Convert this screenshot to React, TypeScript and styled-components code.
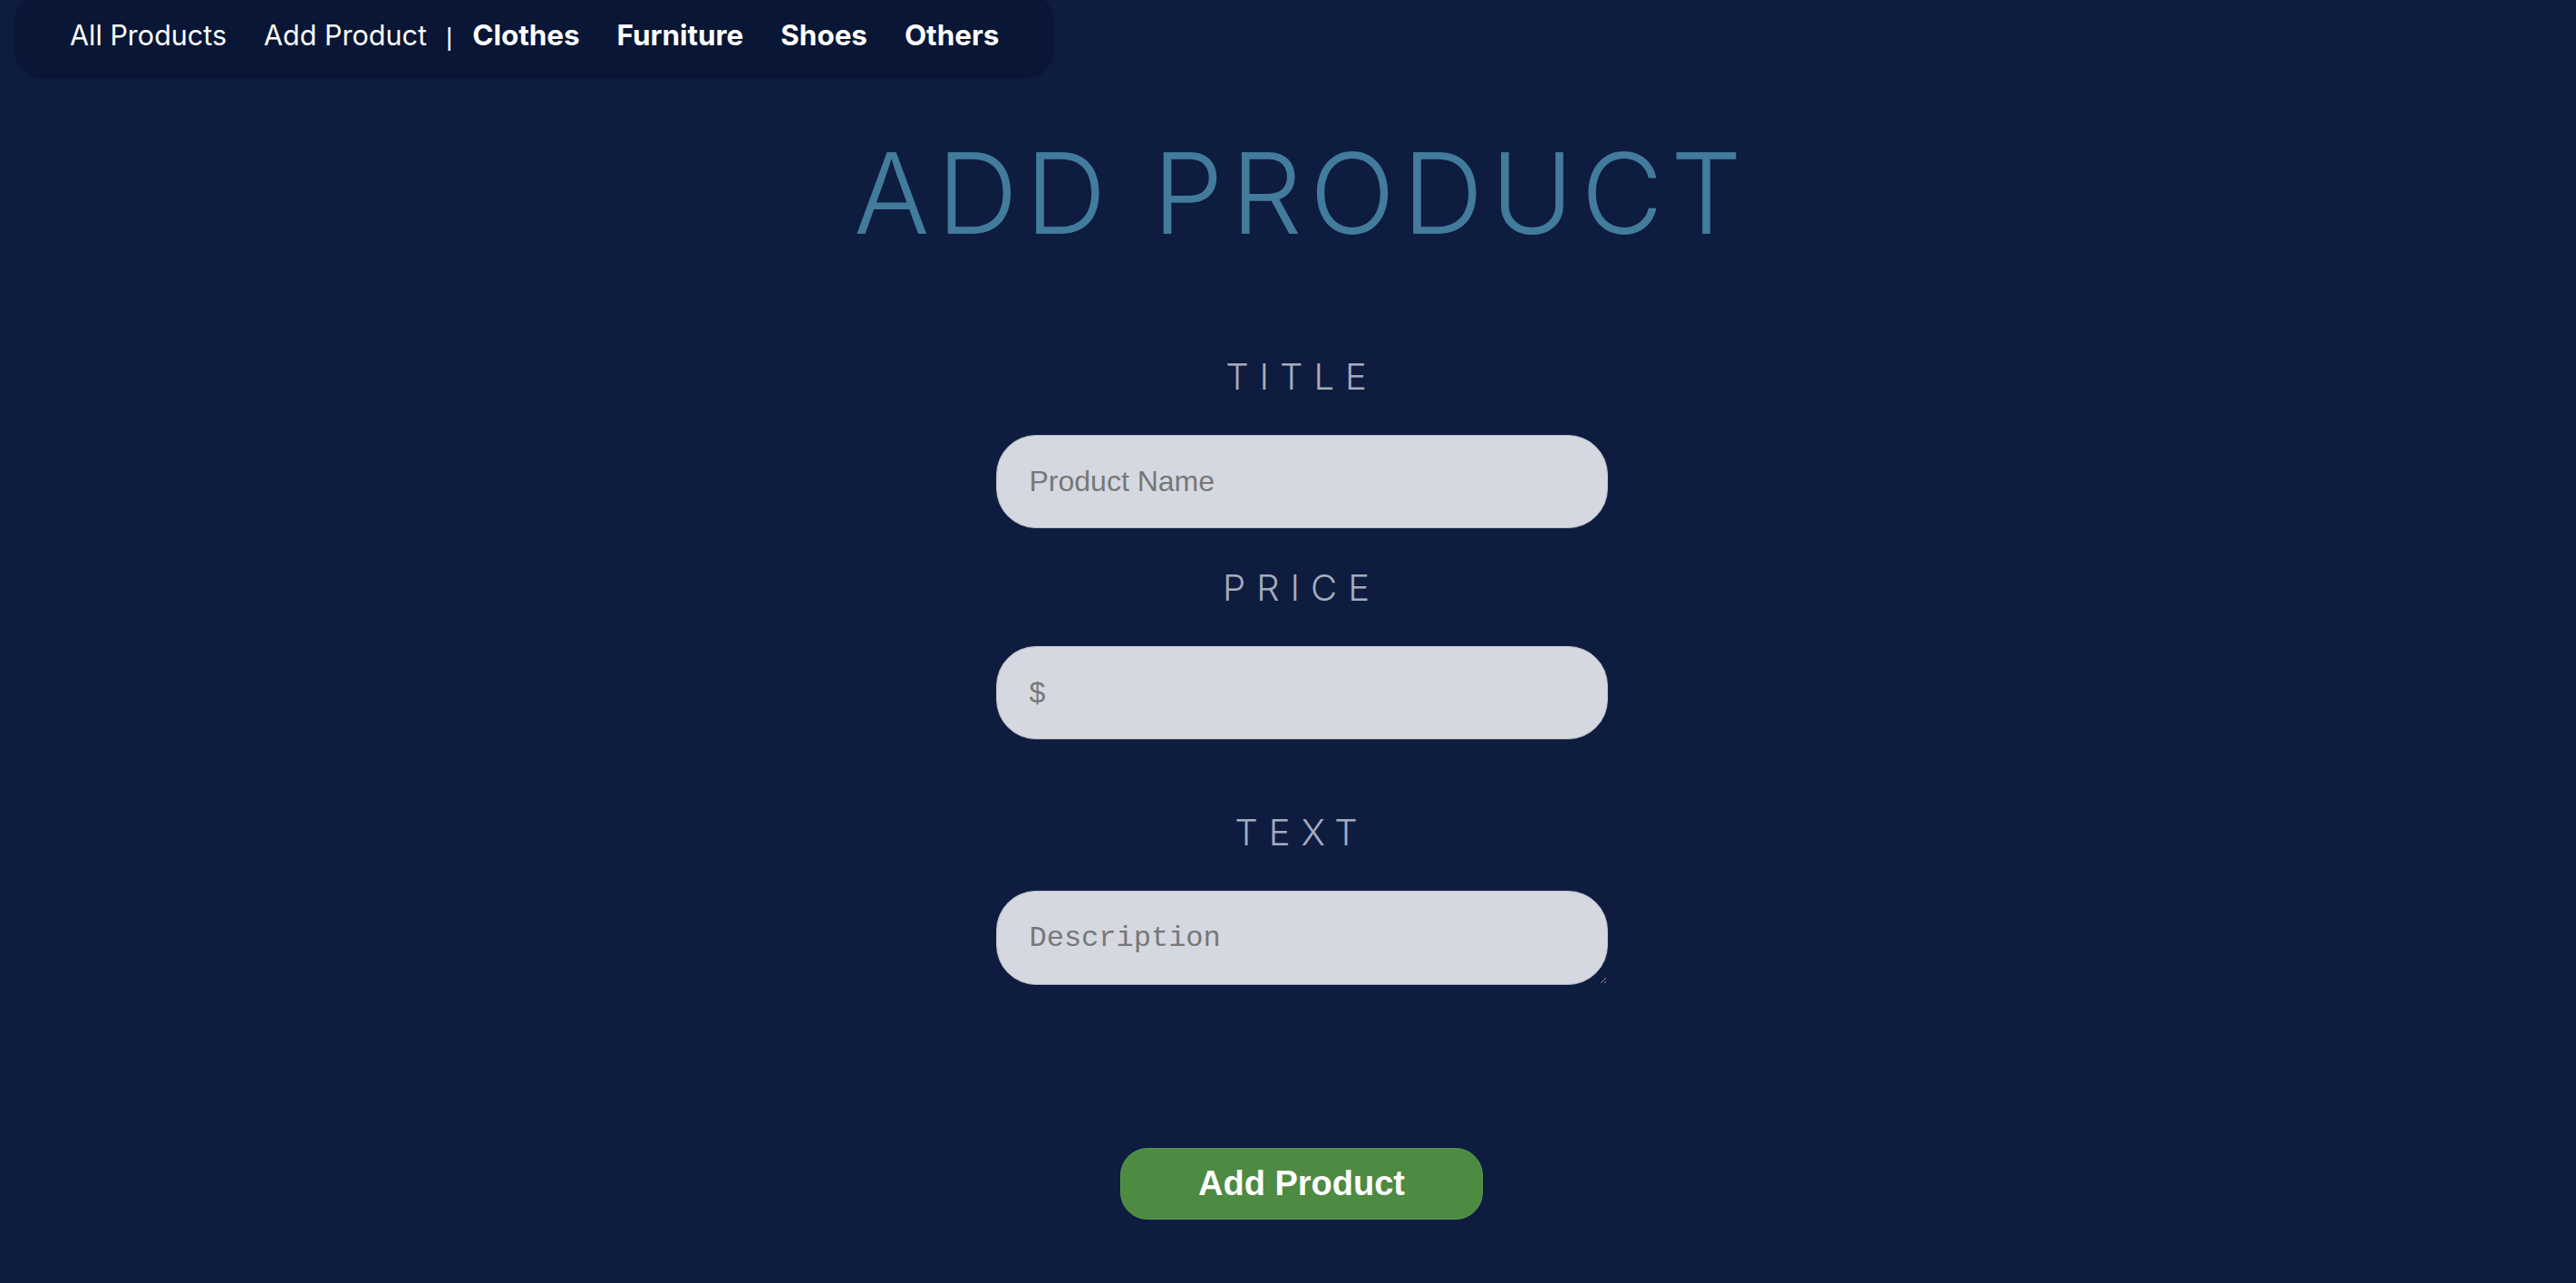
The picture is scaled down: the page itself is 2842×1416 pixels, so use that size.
import React from "react";
import styled, { createGlobalStyle } from "styled-components";

const GlobalStyle = createGlobalStyle`
  html, body {
    margin: 0;
    padding: 0;
    background: #0e1c40;
    font-family: Inter, "Liberation Sans", sans-serif;
  }
  * { box-sizing: border-box; }
`;

const Page = styled.div`
  min-height: 1416px;
  background: #0e1c40;
  overflow: hidden;
`;

const Nav = styled.nav`
  display: inline-flex;
  align-items: baseline;
  height: 95px;
  margin: -8px 0 0 16px;
  padding: 29px 61px 0;
  background: #091635;
  border-radius: 32px;
`;

const NavLink = styled.a<{ $bold?: boolean }>`
  font-family: Inter, "Liberation Sans", sans-serif;
  font-size: ${(p) => (p.$bold ? 31.4 : 30.5)}px;
  line-height: 36px;
  font-weight: ${(p) => (p.$bold ? 700 : 400)};
  color: #ffffff;
  text-decoration: none;
  margin-right: 41px;
  &:last-child { margin-right: 0; }
`;

const Separator = styled.span`
  font-family: "Liberation Sans", Arial, sans-serif;
  font-size: 28px;
  line-height: 36px;
  color: #ffffff;
  margin: 0 22px 0 -20px;
`;

const Main = styled.main`
  display: flex;
  flex-direction: column;
  align-items: center;
  padding-left: 30px;
`;

const Title = styled.h1`
  margin: 64px 0 0;
  font-family: Inter, sans-serif;
  font-weight: 300;
  font-size: 124px;
  line-height: 124px;
  letter-spacing: 8.3px;
  color: #427b9b;
`;

const Form = styled.form`
  display: flex;
  flex-direction: column;
  align-items: center;
  margin-top: 121px;
`;

const Label = styled.label<{ $gap?: number }>`
  margin-top: ${(p) => p.$gap ?? 0}px;
  font-family: Inter, sans-serif;
  font-weight: 300;
  font-size: 40px;
  line-height: 40px;
  letter-spacing: 12px;
  color: #a4acbc;
`;

const fieldBase = `
  width: 675px;
  height: 103px;
  margin-top: 44px;
  background: #d5d8e0;
  border: 1.5px solid #b4b8c0;
  border-radius: 44px;
  padding: 0 36px;
  color: #333;
  outline: none;
`;

const TextInput = styled.input`
  ${fieldBase}
  font-family: "Liberation Sans", Arial, sans-serif;
  font-size: 32px;
  &::placeholder { color: #777777; }
`;

const TextArea = styled.textarea`
  ${fieldBase}
  height: 104px;
  padding-top: 33px;
  font-family: "Liberation Mono", "Courier New", monospace;
  font-size: 32px;
  &::placeholder { color: #777777; }
`;

const SubmitButton = styled.button`
  margin-top: 180px;
  width: 400px;
  height: 79px;
  background: #4d8a42;
  border: 1.5px solid #5c9c50;
  border-radius: 30px;
  color: #ffffff;
  font-family: "Liberation Sans", Arial, sans-serif;
  font-weight: 700;
  font-size: 38px;
  cursor: pointer;
`;

export default function App() {
  return (
    <Page>
      <GlobalStyle />
      <Nav>
        <NavLink href="#">All Products</NavLink>
        <NavLink href="#">Add Product</NavLink>
        <Separator>|</Separator>
        <NavLink href="#" $bold>Clothes</NavLink>
        <NavLink href="#" $bold>Furniture</NavLink>
        <NavLink href="#" $bold>Shoes</NavLink>
        <NavLink href="#" $bold>Others</NavLink>
      </Nav>
      <Main>
        <Title>ADD PRODUCT</Title>
        <Form onSubmit={(e) => e.preventDefault()}>
          <Label htmlFor="title">TITLE</Label>
          <TextInput id="title" placeholder="Product Name" />
          <Label htmlFor="price" $gap={46}>PRICE</Label>
          <TextInput id="price" placeholder="$" />
          <Label htmlFor="text" $gap={83}>TEXT</Label>
          <TextArea id="text" rows={1} placeholder="Description" />
          <SubmitButton type="submit">Add Product</SubmitButton>
        </Form>
      </Main>
    </Page>
  );
}
